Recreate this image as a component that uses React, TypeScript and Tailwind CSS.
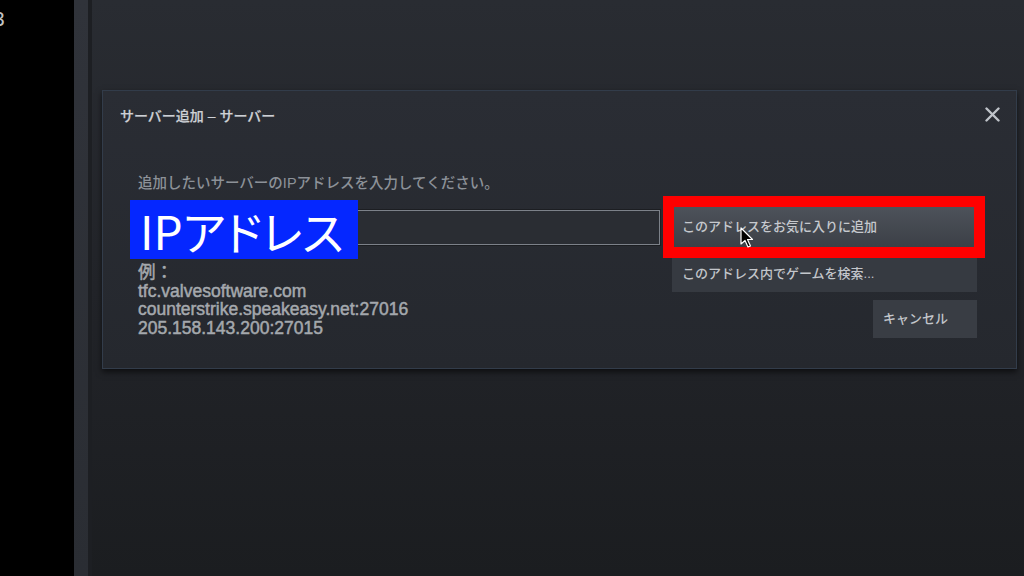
import React from "react";

const jp = "font-['Liberation_Sans','Noto_Sans_CJK_JP',sans-serif]";

function Cursor() {
  return (
    <svg width="16" height="22" viewBox="0 0 16 22" className="absolute left-[68px] top-[20px]">
      <path
        d="M1 1 L1 17 L5 13.5 L8 20 L10.5 19 L7.5 12.5 L12.5 12.5 Z"
        fill="#000"
        stroke="#fff"
        strokeWidth="1.2"
        strokeLinejoin="round"
      />
    </svg>
  );
}

export default function App() {
  return (
    <div className={`w-[1024px] h-[576px] flex overflow-hidden bg-black ${jp}`}>
      <div className="w-[74px] bg-black pt-[7px]">
        <div className="ml-[-7px] text-[21px] leading-[24px] text-[#c4c4c4]">3</div>
      </div>
      <div className="w-[14px] bg-gradient-to-b from-[#30333a] to-[#2a2d33]" />
      <div className="w-[4px] bg-[#1d1f23]" />
      <div className="flex-1 bg-gradient-to-b from-[#292c32] via-[#222429] to-[#1b1d20] pt-[90px] pl-[10px]">
        <div className="relative w-[915px] h-[279px] border border-[#323c4a] bg-gradient-to-b from-[#2a2d34] to-[#25282e] shadow-[0_3px_6px_rgba(0,0,0,0.6)]">
          <div className="h-[50px] flex items-center pl-[17px] text-[14px] font-medium text-[#cdd0d5] [-webkit-text-stroke:0.2px_#cdd0d5]">
            サーバー追加 – サーバー
          </div>
          <svg
            width="15"
            height="15"
            viewBox="0 0 15 15"
            className="absolute right-[16px] top-[16px]"
          >
            <path d="M1.5 1.5 L13.5 13.5 M13.5 1.5 L1.5 13.5" stroke="#bfc3c9" strokeWidth="2.4" strokeLinecap="round" />
          </svg>

          <div className="pl-[35px] pr-[39px]">
            <div className="mt-[32px] text-[14.5px] leading-[20px] font-medium text-[#8c9198]">
              追加したいサーバーのIPアドレスを入力してください。
            </div>
            <div className="mt-[14px] flex gap-[12px] items-start">
              <div className="w-[522px] flex flex-col">
                <div className="relative mt-[3px] h-[35px] border border-[#7c8189] bg-[#2a2d33] shadow-[0_0_0_1px_#1c1e22]">
                  <div className="absolute left-[-9px] top-[-11px] w-[228px] h-[59px] bg-[#0527ff] flex items-center pl-[10px] text-white text-[46px] leading-none font-['Noto_Sans_CJK_JP',sans-serif] [font-feature-settings:'palt']">
                    IPアドレス
                  </div>
                </div>
                <div className="mt-[18px] text-[17.5px] leading-[18.5px] text-[#a4a8ad] [-webkit-text-stroke:0.5px_#a4a8ad]">
                  <div>例：</div>
                  <div>tfc.valvesoftware.com</div>
                  <div>counterstrike.speakeasy.net:27016</div>
                  <div>205.158.143.200:27015</div>
                </div>
              </div>
              <div className="w-[305px] flex flex-col">
                <div className="relative h-[40px]">
                  <div className="h-full bg-gradient-to-b from-[#4d525a] to-[#3c4047] flex items-center pl-[10px] text-[13px] font-medium text-[#c6c9ce]">
                    このアドレスをお気に入りに追加
                  </div>
                  <div className="absolute left-[-9px] right-[-8px] top-[-11px] bottom-[-11px] border-[11px] border-[#ff0000]" />
                  <Cursor />
                </div>
                <div className="mt-[9px] h-[36px] bg-[#363a41] flex items-center pl-[10px] text-[13px] font-medium text-[#c3c6cb]">
                  このアドレス内でゲームを検索...
                </div>
                <div className="mt-[8px] self-end w-[104px] h-[38px] bg-[#393d44] flex items-center pl-[10px] text-[13px] font-medium text-[#c3c6cb]">
                  キャンセル
                </div>
              </div>
            </div>
          </div>
        </div>
      </div>
    </div>
  );
}
